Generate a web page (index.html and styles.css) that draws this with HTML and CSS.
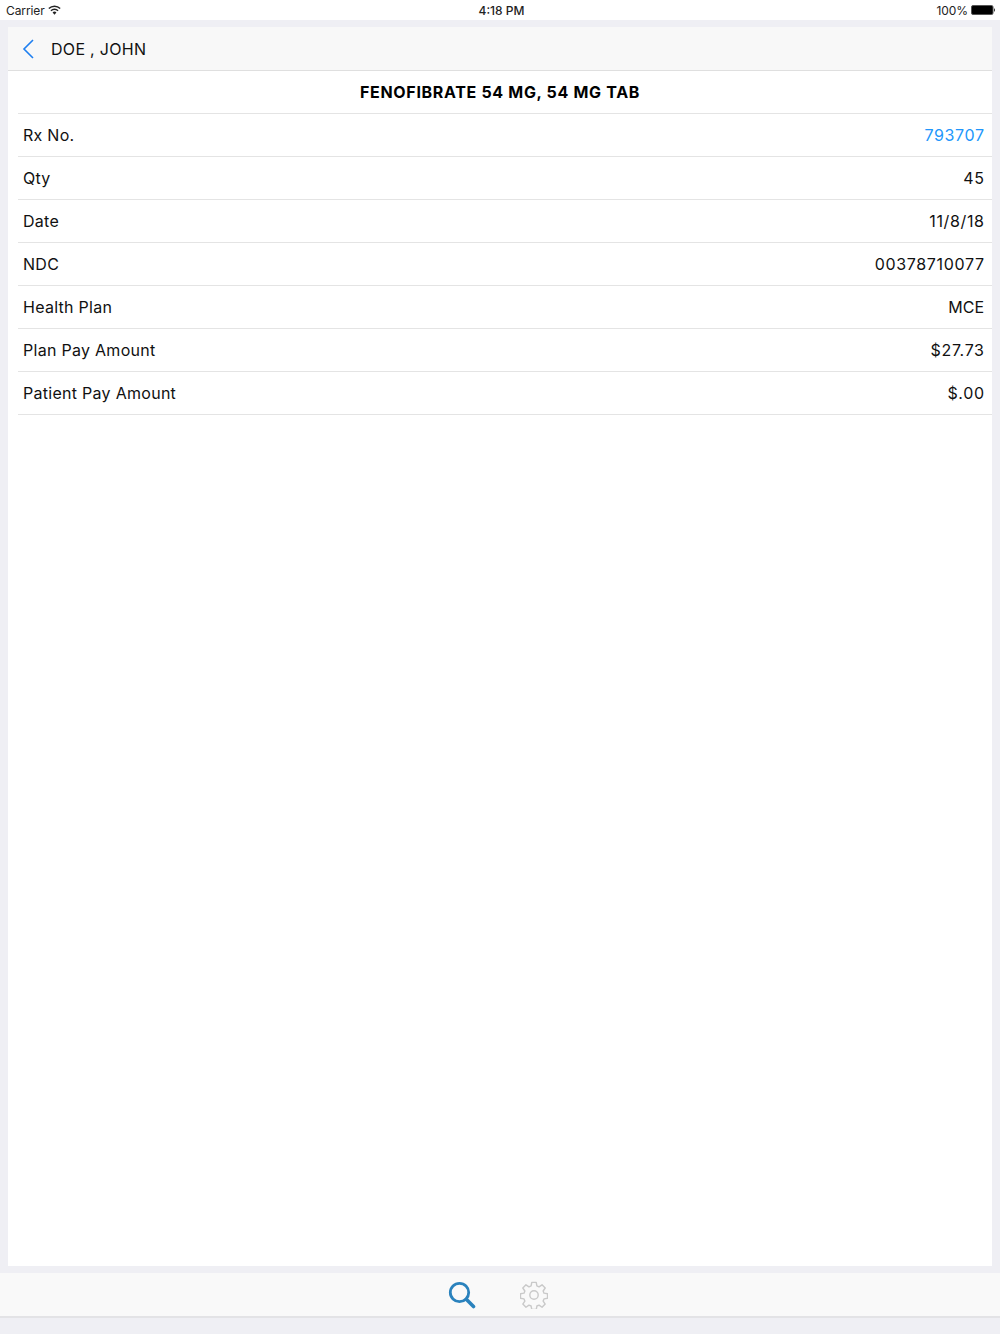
FILE: index.html
```html
<!DOCTYPE html>
<html lang="en">
<head>
<meta charset="utf-8">
<title>Prescription detail</title>
<link rel="stylesheet" href="styles.css">
</head>
<body>
<div class="app">
  <header class="status">
    <div class="status-left">
      <span>Carrier</span>
      <svg class="wifi" width="13" height="10" viewBox="0 0 14 10"><path d="M7 10 4.900 7.600a3 3 0 0 1 4.200 0Z" fill="#222"/><path d="M3.200 5.800a5.400 5.400 0 0 1 7.600 0" fill="none" stroke="#222" stroke-width="1.600"/><path d="M.9 3.400a8.700 8.700 0 0 1 12.200 0" fill="none" stroke="#222" stroke-width="1.600"/></svg>
    </div>
    <div class="status-time">4:18 PM</div>
    <div class="status-right">
      <span>100%</span>
      <svg class="battery" width="24" height="10" viewBox="0 0 24 10"><rect x=".5" y=".5" width="21.500" height="9" rx="1.500" fill="#000" stroke="#555"/><path d="M23 3.200c.6.200 1 .9 1 1.800s-.4 1.600-1 1.800Z" fill="#333"/></svg>
    </div>
  </header>
  <main class="panel">
    <nav class="nav">
      <svg class="back" width="12" height="20" viewBox="0 0 12 20"><path d="M11 1 2 10l9 9" fill="none" stroke="#1e7ff0" stroke-width="1.600"/></svg>
      <span class="nav-title">DOE , JOHN</span>
    </nav>
    <h1 class="drug">FENOFIBRATE 54 MG, 54 MG TAB</h1>
    <div class="rows">
      <div class="row"><span>Rx No.</span><span class="num link">793707</span></div>
      <div class="row"><span>Qty</span><span class="num">45</span></div>
      <div class="row"><span>Date</span><span class="num">11/8/18</span></div>
      <div class="row"><span>NDC</span><span class="num">00378710077</span></div>
      <div class="row"><span>Health Plan</span><span class="word">MCE</span></div>
      <div class="row"><span>Plan Pay Amount</span><span class="num">$27.73</span></div>
      <div class="row"><span>Patient Pay Amount</span><span class="num">$.00</span></div>
    </div>
  </main>
  <footer class="tabs">
    <svg class="tab-search" width="28" height="28" viewBox="0 0 28 28"><circle cx="11.500" cy="11.500" r="9.200" fill="none" stroke="#2a82bd" stroke-width="2.800"/><path d="M18.300 18.300 25.500 25.500" fill="none" stroke="#2a82bd" stroke-width="3.600" stroke-linecap="round"/></svg>
    <svg class="tab-gear" width="28" height="28" viewBox="0 0 30 30"><path d="M12.600 1.500h4.800l.7 3.800 2.300 1 3.200-2.200 3.400 3.400-2.200 3.200.9 2.300 3.800.7v4.800l-3.800.7-.9 2.300 2.200 3.200-3.400 3.400-3.200-2.200-2.300.9-.7 3.800h-4.800l-.7-3.800-2.300-.9-3.200 2.200-3.400-3.400 2.200-3.200-.9-2.300-3.800-.7v-4.800l3.800-.7.900-2.300-2.200-3.200 3.400-3.400 3.200 2.200 2.300-1Z" fill="none" stroke="#c9c9c9" stroke-width="1.500" stroke-linejoin="round"/><circle cx="15" cy="15" r="4.500" fill="none" stroke="#c9c9c9" stroke-width="1.500"/></svg>
  </footer>
</div>
</body>
</html>
```

FILE: styles.css
```css
* { box-sizing: border-box; margin: 0; padding: 0; }
html, body { height: 100%; }
body {
  background: #efeff4;
  color: #111;
  font-family: Inter, "Liberation Sans", sans-serif;
  overflow: hidden;
}
.app { height: 1334px; display: flex; flex-direction: column; }
.status {
  height: 20px;
  background: #fff;
  display: grid;
  grid-template-columns: 1fr auto 1fr;
  align-items: center;
  padding: 0 6px;
  font-size: 12px;
  letter-spacing: -.1px;
  color: #222;
}
.status-left { display: flex; align-items: center; gap: 3px; }
.wifi { margin-top: -1px; }
.status-time { font-weight: 500; letter-spacing: 0; padding-left: 3px; }
.status-right { display: flex; justify-content: flex-end; align-items: center; gap: 3px; margin-right: -1px; }
.panel {
  margin: 7px 8px 0;
  height: 1239px;
  background: #fff;
  display: flex;
  flex-direction: column;
}
.nav {
  height: 44px;
  flex: none;
  background: #f8f8f8;
  border-bottom: 1px solid #dfdfdf;
  display: flex;
  align-items: center;
  padding-left: 14px;
  gap: 17px;
}
.nav-title { font-size: 16px; letter-spacing: .3px; }
.drug {
  height: 43px;
  flex: none;
  margin-left: 10px;
  border-bottom: 1px solid #e4e4e4;
  display: flex;
  align-items: center;
  justify-content: center;
  padding-right: 10px;
  font-size: 16px;
  font-weight: 700;
  letter-spacing: .68px;
  color: #000;
}
.rows { margin-left: 10px; }
.row {
  height: 43px;
  border-bottom: 1px solid #e4e4e4;
  display: flex;
  align-items: center;
  justify-content: space-between;
  padding: 0 8px 0 5px;
  font-size: 16px;
  letter-spacing: .28px;
}
.num { letter-spacing: .65px; margin-right: -.65px; }
.word { letter-spacing: 0; }
.link { color: #2196fb; }
.tabs {
  margin-top: 7px;
  height: 45px;
  background: #f9f9f9;
  border-bottom: 2px solid #e3e3e6;
  display: flex;
  align-items: center;
  justify-content: center;
  gap: 44px;
  padding-right: 5px;
}
```
